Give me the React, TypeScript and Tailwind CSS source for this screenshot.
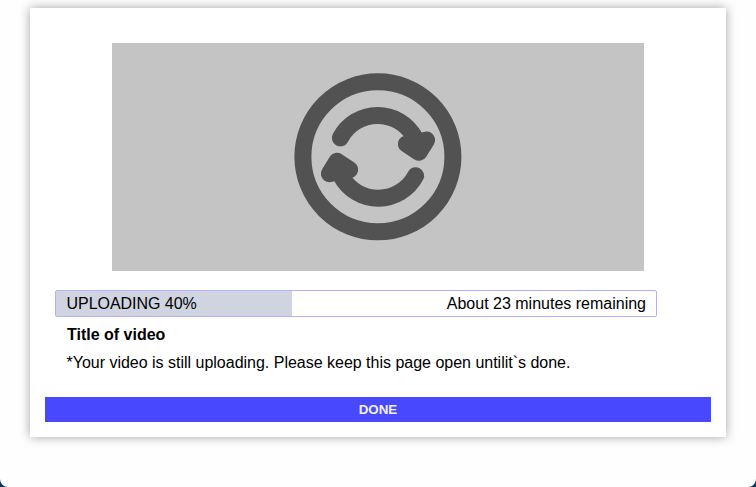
function ArrowHalf() {
  return (
    <>
      <path d="M169 228A126.5 126.5 0 0 1 392 226" fill="none" strokeWidth="51" />
      <path d="M367 246L428 234L405 271Z" strokeWidth="51" />
    </>
  );
}

function SyncIcon() {
  return (
    <svg
      viewBox="0 0 570 570"
      className="h-[190px] w-[190px] fill-[#525252] stroke-[#525252]"
      strokeLinecap="round"
      strokeLinejoin="round"
    >
      <circle cx="281.7" cy="284.5" r="225" fill="none" strokeWidth="51" />
      <ArrowHalf />
      <g transform="rotate(180 282 284.5)">
        <ArrowHalf />
      </g>
    </svg>
  );
}

export default function App() {
  return (
    <div className="h-[487px] w-[756px] overflow-hidden bg-[#06385f] font-['Liberation_Sans',Arial,sans-serif] text-base text-black">
      <div className="h-full rounded-b-[8px] bg-[#fefefe] px-[30px] pt-2">
        <main className="flex h-[429px] flex-col bg-white px-[15px] pt-[35px] shadow-[0_0_10px_rgba(0,0,0,0.36)]">
          <div className="flex h-[228px] w-[532px] justify-center self-center bg-[#c4c4c4] pt-[19px] pl-[2px]">
            <SyncIcon />
          </div>
          <div className="mt-[19px] ml-[10px] flex h-[27px] w-[602px] rounded-[2px] border border-[#b1b1ff]">
            <div className="flex w-[236px] items-center bg-[#cfd4e0] pl-[10.5px] leading-[25px] tracking-[-0.04px]">
              UPLOADING 40%
            </div>
            <div className="flex-1 pr-[10px] text-right leading-[25px]">
              About 23 minutes remaining
            </div>
          </div>
          <h1 className="mt-[8px] ml-[22px] leading-[20px] font-bold">Title of video</h1>
          <p className="mt-[8px] ml-[21.5px] leading-[20px] tracking-[-0.01px]">
            *Your video is still uploading. Please keep this page open untilit`s done.
          </p>
          <button className="mt-[24px] h-[25px] bg-[#4848ff] text-[13.333px] leading-[25px] font-bold text-[#f0f0ff]">
            DONE
          </button>
        </main>
      </div>
    </div>
  );
}
